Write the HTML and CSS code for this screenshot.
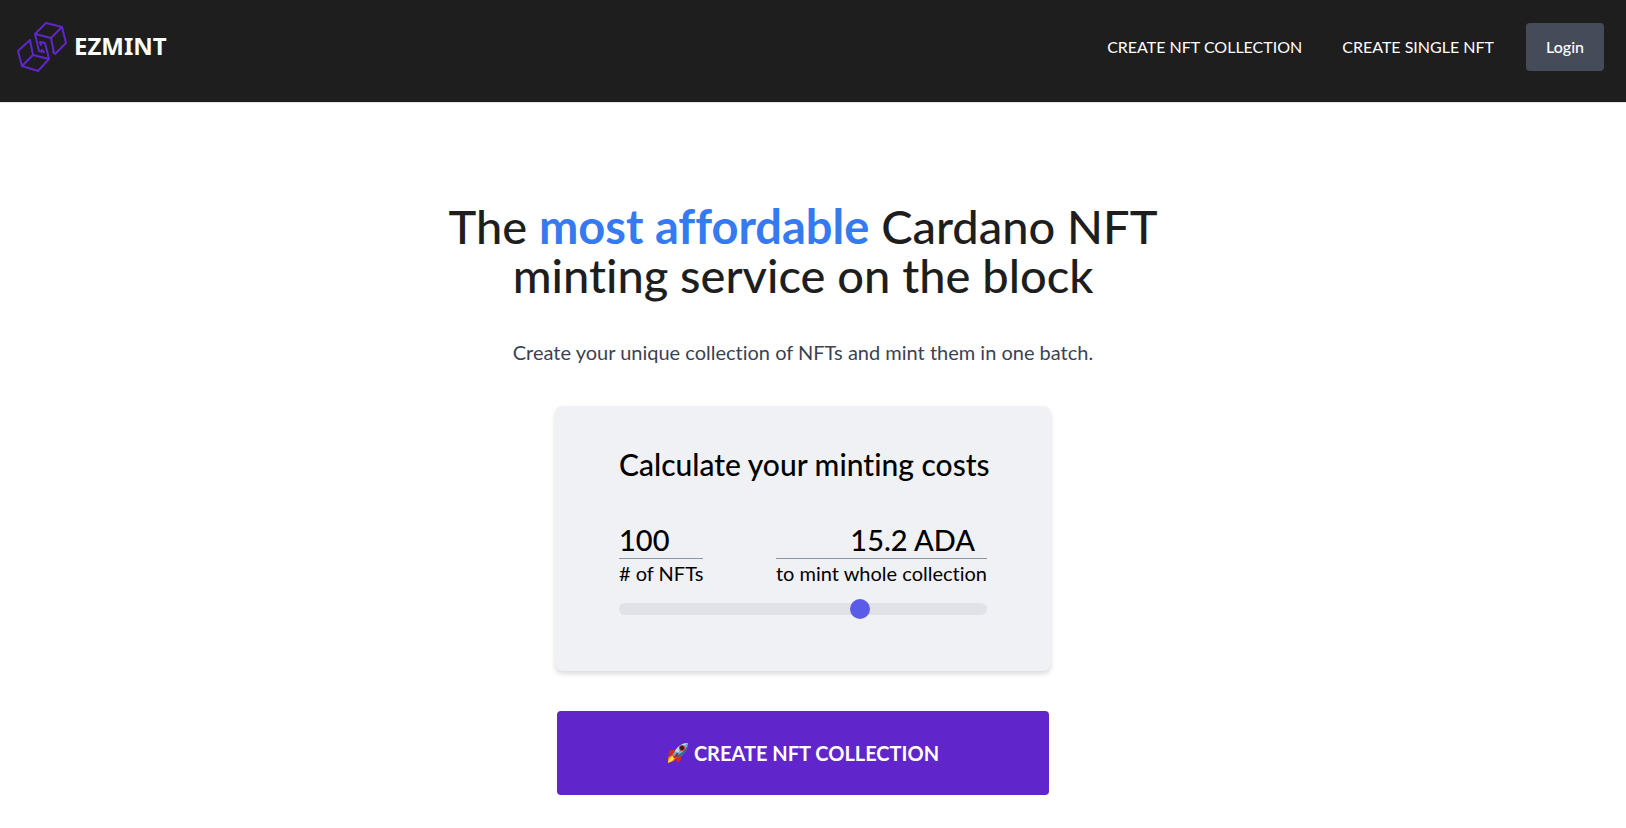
FILE: index.html
```html
<!DOCTYPE html>
<html lang="en">
<head>
<meta charset="utf-8">
<title>EZMINT</title>
<meta name="viewport" content="width=device-width, initial-scale=1">
<link rel="stylesheet" href="styles.css">
</head>
<body>
<header class="header">
  <a class="brand" href="#">
    <svg class="brand-mark" viewBox="0 0 52 52" aria-hidden="true">
      <path d="M37 37 39 39 50 28 46 12 30 8 19 19 23 36 28 37 26 35M19 19 35 23 46 12M35 23 38 38M24 27 29 28 33 44 17 40 14 25 12 27M14 25 2 36 6 51 22 56 33 44M17 40 6 51M24 27 25 30" transform="translate(0 -5)"/>
    </svg>
    <span class="brand-name">EZMINT</span>
  </a>
  <nav class="nav">
    <a class="nav-link" href="#">CREATE NFT COLLECTION</a>
    <a class="nav-link" href="#">CREATE SINGLE NFT</a>
    <button class="login" type="button">Login</button>
  </nav>
</header>
<main class="hero">
  <h1 class="title">The <strong class="highlight">most affordable</strong> Cardano NFT<br>minting service on the block</h1>
  <p class="subtitle">Create your unique collection of NFTs and mint them in one batch.</p>
  <section class="card">
    <h2 class="card-title">Calculate your minting costs</h2>
    <div class="figures">
      <div class="figure">
        <input class="value" id="count" type="text" inputmode="numeric" value="100">
        <label class="caption" for="count"># of NFTs</label>
      </div>
      <div class="figure">
        <input class="value value-cost" id="cost" type="text" value="15.2 ADA" readonly>
        <label class="caption" for="cost">to mint whole collection</label>
      </div>
    </div>
    <input class="slider" type="range" min="0" max="1000" value="664" aria-label="Number of NFTs">
  </section>
  <button class="cta" type="button">
    <svg class="rocket" viewBox="0 0 22 22" aria-hidden="true">
      <path fill="#e0271c" d="M8 8 3 8 1 13 7 12zM14 13 14 18 10 21 9 15z"/>
      <path fill="#f7631b" d="M6 12 1 15 1 21 7 19 10 15z"/>
      <path fill="#ffe14a" d="M5 14 2 17 1 21 5 19 8 16z"/>
      <path fill="#5eb0d5" d="M21 1C15 1 10 4 6 12L10 16C17 13 21 8 21 1z"/>
      <path fill="#c5dce6" d="M21 1C16 1 11 4 8 9L11 11C14 6 17 3 21 1z"/>
      <path fill="#34627f" d="M21 3C20 9 16 13 10 16L8 14C13 13 18 9 21 3z"/>
      <circle cx="15" cy="6" r="3" fill="#d33224"/>
      <circle cx="15" cy="6" r="2" fill="#241b2b"/>
      <path stroke="#b81f25" stroke-width="2" d="m11 11-4 5"/>
    </svg>
    <span>CREATE NFT COLLECTION</span>
  </button>
</main>
</body>
</html>
```
FILE: styles.css
```css
* { box-sizing: border-box; }
body {
  margin: 0;
  background: #fff;
  color: #000;
  font-family: Lato, "Open Sans", sans-serif;
  font-variant-ligatures: none;
}
button, input { font: inherit; }
.header {
  display: flex;
  justify-content: space-between;
  align-items: flex-start;
  padding: 20px 22px 30px 16px;
  background: #1e1e1e;
  border-bottom: 1px solid #e1e2e8;
}
.brand {
  display: flex;
  align-items: center;
  gap: 6px;
  color: #fff;
  text-decoration: none;
}
.brand-mark {
  width: 52px;
  height: 52px;
  fill: none;
  stroke: #6025cb;
  stroke-width: 2;
  stroke-linejoin: round;
  stroke-linecap: round;
}
.brand-name {
  padding-bottom: 2px;
  font-family: "Noto Sans", sans-serif;
  font-size: 24px;
  font-weight: 700;
}
.nav {
  display: flex;
  align-items: center;
  gap: 32px;
  padding-top: 3px;
}
.nav-link {
  padding: 0 8px 2px 0;
  color: #fff;
  font-size: 16px;
  text-decoration: none;
}
.nav-link + .login { margin-left: -8px; }
.login {
  height: 48px;
  padding: 0 20px 2px;
  border: 0;
  border-radius: 4px;
  background: #454b58;
  color: #fff;
  font-size: 16px;
  font-weight: 500;
}
.hero {
  display: flex;
  flex-direction: column;
  align-items: center;
  padding: 99px 20px 32px 0;
}
.title {
  margin: 0;
  color: #1e1e1e;
  font-size: 47px;
  font-weight: 500;
  line-height: 49px;
  text-align: center;
}
.highlight {
  color: #357af0;
  font-weight: 700;
}
.subtitle {
  margin: 40px 0 42px;
  color: #3b4252;
  font-size: 20px;
  line-height: 24px;
}
.card {
  width: 496px;
  max-width: 100%;
  padding: 38px 64px 56px;
  border-radius: 8px;
  background: #f0f1f4;
  box-shadow: 0 3px 5px rgba(0, 0, 0, .14);
}
.card-title {
  margin: 0 0 36px;
  font-size: 30px;
  font-weight: 500;
  line-height: 40px;
  white-space: nowrap;
}
.figures {
  display: flex;
  justify-content: space-between;
}
.figure {
  display: grid;
}
.value {
  width: 0;
  min-width: 100%;
  height: 39px;
  padding: 0;
  border: 0;
  border-bottom: 1px solid #8b95a3;
  background: transparent;
  color: #000;
  font-size: 29px;
  font-weight: 500;
}
.value-cost {
  padding-right: 12px;
  text-align: right;
}
.caption {
  font-size: 20px;
  line-height: 28px;
}
.slider {
  display: block;
  width: 100%;
  height: 12px;
  margin: 16px 0 0;
  border-radius: 6px;
  background: #e1e2e8;
  appearance: none;
}
.slider::-webkit-slider-thumb {
  width: 20px;
  height: 20px;
  border-radius: 50%;
  background: #5b5be9;
  appearance: none;
}
.cta {
  display: flex;
  justify-content: center;
  align-items: center;
  gap: 5px;
  width: 492px;
  max-width: 100%;
  margin-top: 40px;
  padding: 30px 20px;
  border: 0;
  border-radius: 4px;
  background: #6025cb;
  color: #fff;
  font-size: 20px;
  font-weight: 700;
  line-height: 24px;
}
.rocket {
  width: 22px;
  height: 22px;
}
```
